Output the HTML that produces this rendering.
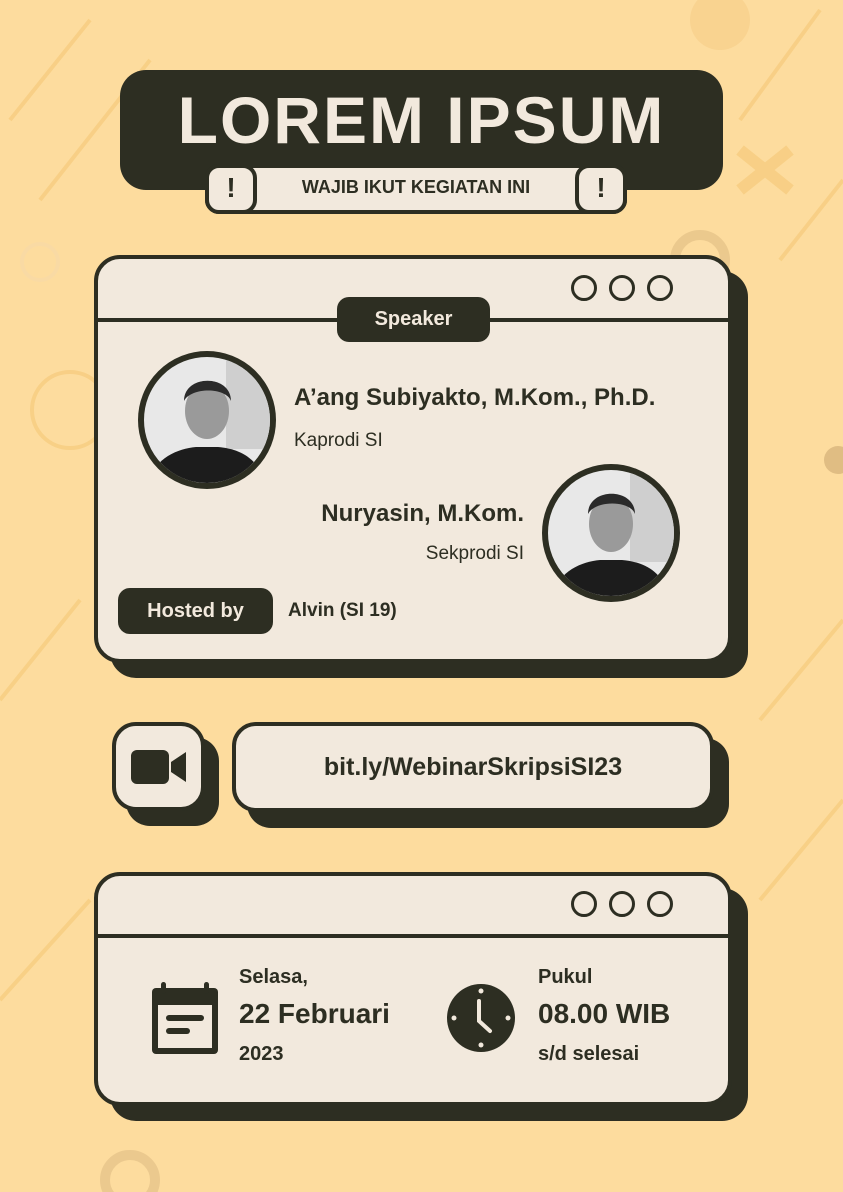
<!DOCTYPE html>
<html><head><meta charset="utf-8"><style>
*{margin:0;padding:0;box-sizing:border-box}
body{width:843px;height:1192px;background:#fddc9e;position:relative;overflow:hidden;font-family:"Liberation Sans",sans-serif;color:#2d2e22}
.a{position:absolute}
.dark{background:#2d2e22}
.cream{background:#f2e9dd}
.t{position:absolute;white-space:nowrap}
.dot{position:absolute;width:26px;height:26px;border:3px solid #2d2e22;border-radius:50%}
</style></head><body>
<svg class="a" style="left:0;top:0" width="843" height="1192">
<g stroke="#f5c877" stroke-width="4" fill="none" opacity=".6">
<line x1="10" y1="120" x2="90" y2="20"/><line x1="40" y1="200" x2="150" y2="60"/><line x1="740" y1="120" x2="820" y2="10"/>
<line x1="780" y1="260" x2="843" y2="180"/><line x1="0" y1="700" x2="80" y2="600"/><line x1="760" y1="720" x2="843" y2="620"/>
<line x1="0" y1="1000" x2="90" y2="900"/><line x1="760" y1="900" x2="843" y2="800"/>
<circle cx="70" cy="410" r="38"/><circle cx="40" cy="262" r="18" stroke="#f7d9a8"/>
<path d="M740 150 L790 190 M790 150 L740 190" stroke-width="12"/>
<circle cx="700" cy="260" r="25" stroke="#e0bd83" stroke-width="10"/>
<circle cx="130" cy="1180" r="25" stroke="#e0bd83" stroke-width="10"/>
</g>
<circle cx="720" cy="20" r="30" fill="#f7cf8a" opacity=".7"/>
<circle cx="838" cy="460" r="14" fill="#e0bd83"/>
</svg>

<div class="a dark" style="left:120px;top:70px;width:603px;height:120px;border-radius:26px"></div>
<div class="t" style="left:120px;width:603px;top:82px;text-align:center;font-size:66px;font-weight:bold;color:#f2e9dd;letter-spacing:2px">LOREM IPSUM</div>
<div class="a cream" style="left:205px;top:164px;width:422px;height:50px;border:4px solid #2d2e22;border-radius:14px"></div>
<div class="t" style="left:205px;width:422px;top:177px;text-align:center;font-size:18px;font-weight:bold">WAJIB IKUT KEGIATAN INI</div>
<div class="a cream" style="left:205px;top:164px;width:52px;height:50px;border:4px solid #2d2e22;border-radius:14px;text-align:center;font-size:28px;font-weight:bold;line-height:40px">!</div>
<div class="a cream" style="left:575px;top:164px;width:52px;height:50px;border:4px solid #2d2e22;border-radius:14px;text-align:center;font-size:28px;font-weight:bold;line-height:40px">!</div>

<div class="a dark" style="left:110px;top:271px;width:638px;height:407px;border-radius:26px"></div>
<div class="a cream" style="left:94px;top:255px;width:638px;height:408px;border:4px solid #2d2e22;border-radius:26px"></div>
<div class="a dark" style="left:96px;top:318px;width:634px;height:4px"></div>
<div class="dot" style="left:571px;top:275px"></div><div class="dot" style="left:609px;top:275px"></div><div class="dot" style="left:647px;top:275px"></div>
<div class="a dark" style="left:337px;top:297px;width:153px;height:45px;border-radius:12px;color:#f2e9dd;font-size:20px;font-weight:bold;text-align:center;line-height:45px">Speaker</div>

<svg class="a" style="left:136px;top:349px" width="142" height="142"><circle cx="71" cy="71" r="66" fill="#e8e8e8" stroke="#2d2e22" stroke-width="6"/><clipPath id="c1"><circle cx="71" cy="71" r="63"/></clipPath><g clip-path="url(#c1)"><rect x="90" y="10" width="60" height="90" fill="#cfcfcf"/><path d="M10 142 C15 110 40 100 60 98 L82 98 C105 100 125 110 132 142Z" fill="#1c1c1c"/><ellipse cx="71" cy="62" rx="22" ry="28" fill="#9a9a9a"/><path d="M48 52 C48 25 95 25 95 52 C90 38 55 38 48 52Z" fill="#2a2a2a"/></g></svg>
<svg class="a" style="left:540px;top:462px" width="142" height="142"><circle cx="71" cy="71" r="66" fill="#e8e8e8" stroke="#2d2e22" stroke-width="6"/><clipPath id="c2"><circle cx="71" cy="71" r="63"/></clipPath><g clip-path="url(#c2)"><rect x="90" y="10" width="60" height="90" fill="#cfcfcf"/><path d="M10 142 C15 110 40 100 60 98 L82 98 C105 100 125 110 132 142Z" fill="#1c1c1c"/><ellipse cx="71" cy="62" rx="22" ry="28" fill="#9a9a9a"/><path d="M48 52 C48 25 95 25 95 52 C90 38 55 38 48 52Z" fill="#2a2a2a"/></g></svg>

<div class="t" style="left:294px;top:384px;font-size:24px;font-weight:bold">A’ang Subiyakto, M.Kom., Ph.D.</div>
<div class="t" style="left:294px;top:430px;font-size:19px">Kaprodi SI</div>
<div class="t" style="right:319px;top:500px;font-size:24px;font-weight:bold">Nuryasin, M.Kom.</div>
<div class="t" style="right:319px;top:543px;font-size:19px">Sekprodi SI</div>
<div class="a dark" style="left:118px;top:588px;width:155px;height:46px;border-radius:12px;color:#f2e9dd;font-size:20px;font-weight:bold;text-align:center;line-height:46px">Hosted by</div>
<div class="t" style="left:288px;top:600px;font-size:19px;font-weight:bold">Alvin (SI 19)</div>

<div class="a dark" style="left:126px;top:737px;width:93px;height:89px;border-radius:24px"></div>
<div class="a cream" style="left:112px;top:722px;width:93px;height:89px;border:4px solid #2d2e22;border-radius:24px"></div>
<svg class="a" style="left:131px;top:748px" width="56" height="38"><rect x="0" y="2" width="38" height="34" rx="6" fill="#2d2e22"/><path d="M40 14 L55 4 L55 34 L40 24Z" fill="#2d2e22"/></svg>
<div class="a dark" style="left:247px;top:738px;width:482px;height:90px;border-radius:24px"></div>
<div class="a cream" style="left:232px;top:722px;width:482px;height:90px;border:4px solid #2d2e22;border-radius:24px;text-align:center;line-height:82px;font-size:25px;font-weight:bold">bit.ly/WebinarSkripsiSI23</div>

<div class="a dark" style="left:110px;top:888px;width:638px;height:233px;border-radius:26px"></div>
<div class="a cream" style="left:94px;top:872px;width:638px;height:234px;border:4px solid #2d2e22;border-radius:26px"></div>
<div class="a dark" style="left:96px;top:934px;width:634px;height:4px"></div>
<div class="dot" style="left:571px;top:891px"></div><div class="dot" style="left:609px;top:891px"></div><div class="dot" style="left:647px;top:891px"></div>
<svg class="a" style="left:152px;top:981px" width="66" height="74"><rect x="0" y="7" width="66" height="66" rx="4" fill="#2d2e22"/><rect x="6" y="24" width="54" height="43" fill="#f2e9dd"/><rect x="14" y="34" width="38" height="6" rx="3" fill="#2d2e22"/><rect x="14" y="47" width="24" height="6" rx="3" fill="#2d2e22"/><rect x="9" y="1" width="5" height="12" rx="2.5" fill="#2d2e22"/><rect x="52" y="1" width="5" height="12" rx="2.5" fill="#2d2e22"/></svg>
<div class="t" style="left:239px;top:966px;font-size:20px;font-weight:bold">Selasa,</div>
<div class="t" style="left:239px;top:998px;font-size:28px;font-weight:bold">22 Februari</div>
<div class="t" style="left:239px;top:1043px;font-size:20px;font-weight:bold">2023</div>
<svg class="a" style="left:446px;top:983px" width="70" height="70"><ellipse cx="35" cy="35" rx="34" ry="34" fill="#2d2e22"/><g fill="#f2e9dd"><circle cx="35" cy="8" r="2.5"/><circle cx="35" cy="62" r="2.5"/><circle cx="8" cy="35" r="2.5"/><circle cx="62" cy="35" r="2.5"/></g><path d="M33 18 L33 38 L44 48" stroke="#f2e9dd" stroke-width="4" fill="none" stroke-linecap="round"/></svg>
<div class="t" style="left:538px;top:966px;font-size:20px;font-weight:bold">Pukul</div>
<div class="t" style="left:538px;top:998px;font-size:28px;font-weight:bold">08.00 WIB</div>
<div class="t" style="left:538px;top:1043px;font-size:20px;font-weight:bold">s/d selesai</div>
</body></html>
